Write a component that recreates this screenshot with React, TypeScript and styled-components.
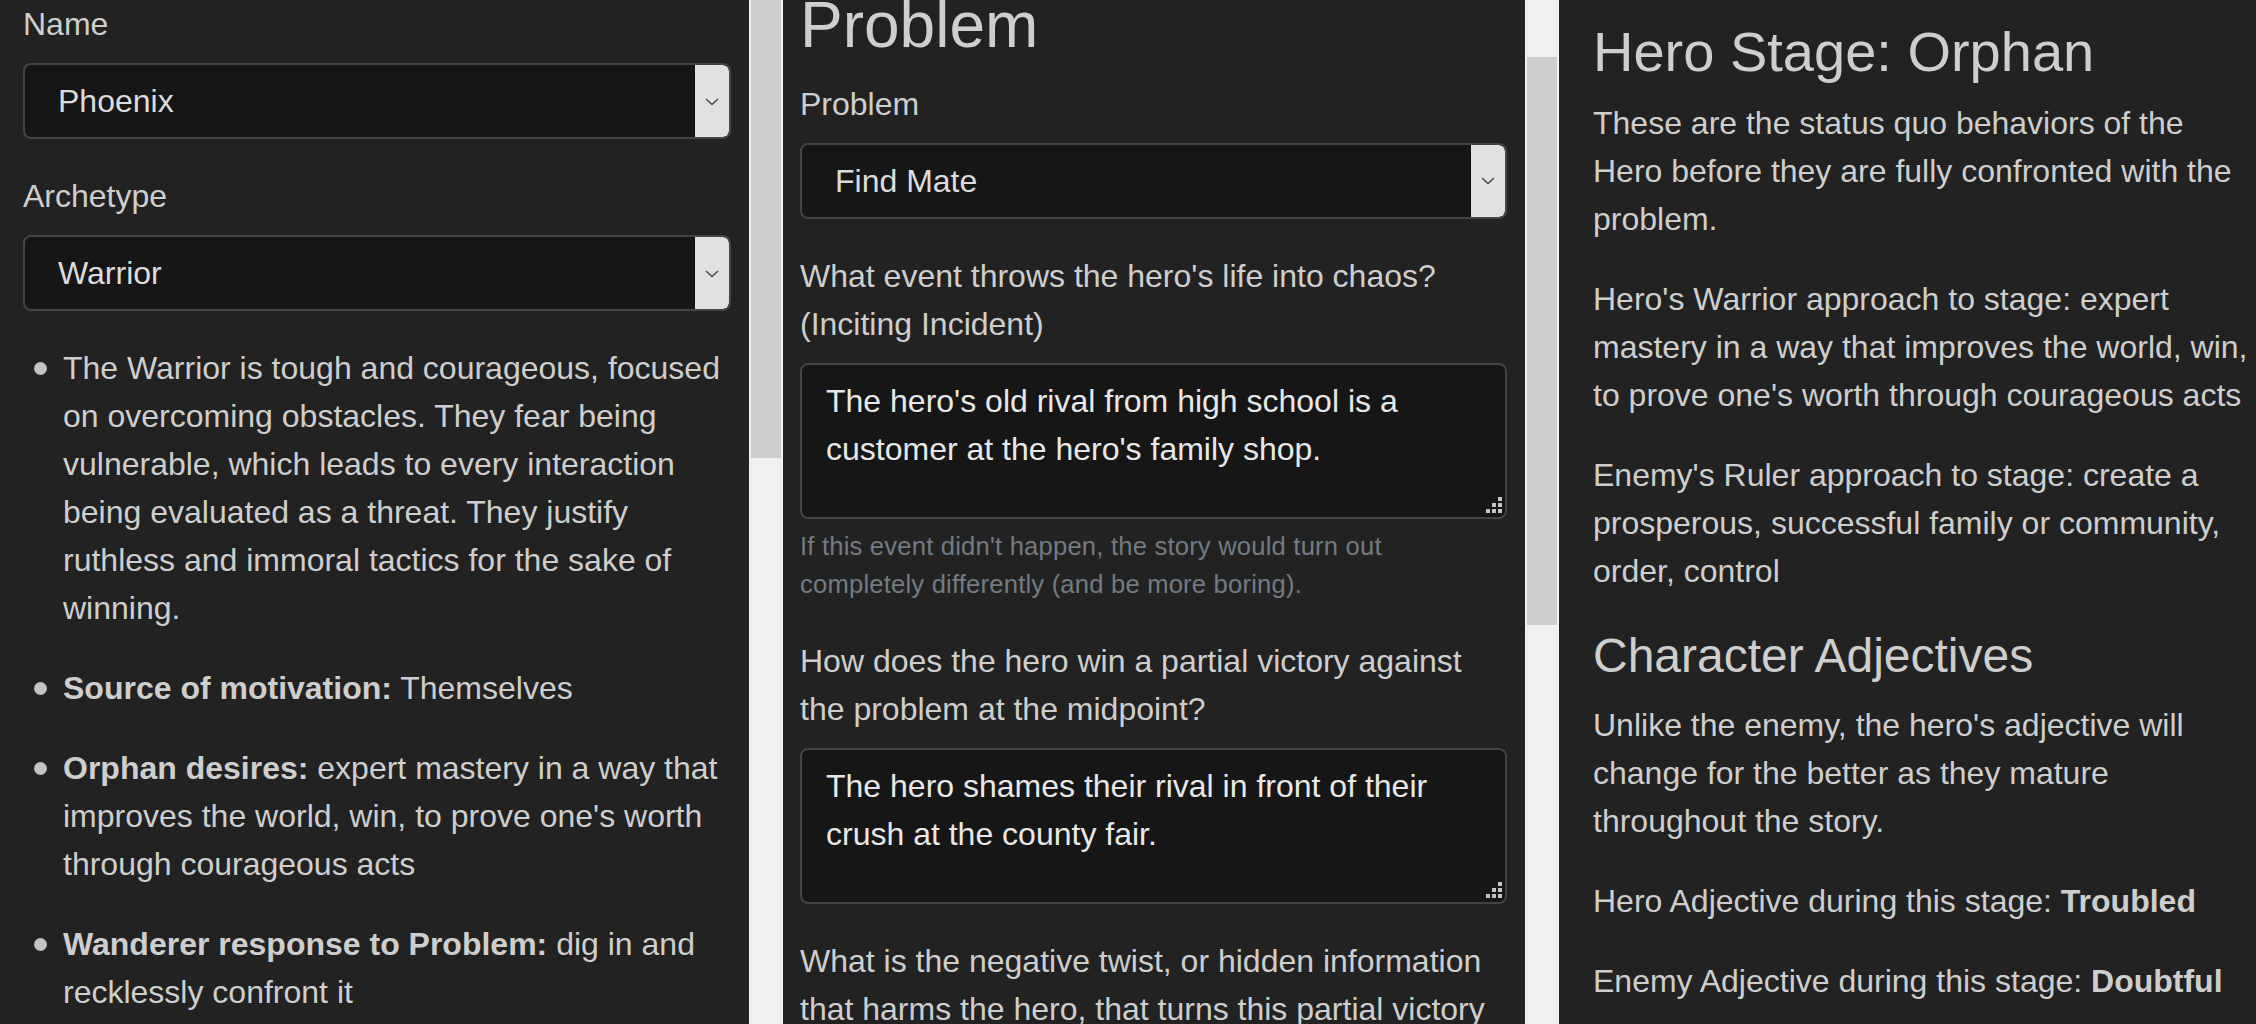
import React from "react";
import styled, { createGlobalStyle } from "styled-components";

const GlobalStyle = createGlobalStyle`
  html, body {
    margin: 0;
    padding: 0;
    background: #222222;
  }
  body {
    font-family: "Liberation Sans", Arial, sans-serif;
    color: #cecece;
  }
  *, *::before, *::after {
    box-sizing: border-box;
  }
`;

const Page = styled.div`
  display: flex;
  width: 2256px;
  height: 1024px;
  overflow: hidden;
  background: #222222;
`;

const Panel = styled.section<{ $width?: number; $pad: string }>`
  flex: ${(p) => (p.$width ? `0 0 ${p.$width}px` : "1 1 auto")};
  height: 100%;
  overflow: hidden;
  background: #222222;
  padding: ${(p) => p.$pad};
  font-size: 32px;
  line-height: 48px;
  color: #cecece;
`;

const ScrollTrack = styled.div`
  flex: 0 0 34px;
  height: 100%;
  background: #f0f0f0;
  padding: 0 2px;
  display: flex;
  flex-direction: column;
`;

const ScrollThumb = styled.div<{ $top: number; $height: number }>`
  margin-top: ${(p) => p.$top}px;
  height: ${(p) => p.$height}px;
  background: #cdcdcd;
  flex: none;
`;

const FormGroup = styled.div`
  margin-bottom: 33px;
`;

const Label = styled.label`
  display: block;
  margin-bottom: 15px;
`;

const SelectBox = styled.div`
  display: flex;
  height: 76px;
  border: 2px solid #444444;
  border-radius: 8px;
  background: #161616;
  overflow: hidden;
`;

const SelectValue = styled.div`
  flex: 1;
  display: flex;
  align-items: center;
  padding-left: 33px;
  color: #dcdcdc;
  font-size: 32px;
`;

const SelectButton = styled.div`
  flex: 0 0 34px;
  display: flex;
  align-items: center;
  justify-content: center;
  background: #e1e1e1;
  border-radius: 0 6px 6px 0;
`;

const TextBox = styled.div`
  position: relative;
  height: 156px;
  border: 2px solid #444444;
  border-radius: 8px;
  background: #161616;
  padding: 12px 24px;
  color: #e8e8e8;
  font-size: 32px;
  line-height: 48px;
`;

const Grip = styled.svg`
  position: absolute;
  right: 3px;
  bottom: 4px;
`;

const HelpText = styled.small`
  display: block;
  margin-top: 8px;
  font-size: 25.6px;
  line-height: 38.4px;
  letter-spacing: 0.2px;
  color: #737b83;
`;

const BigTitle = styled.h2`
  margin: 0 0 16px;
  font-size: 64px;
  line-height: 1.2;
  font-weight: 400;
  color: #cecece;
`;

const Heading = styled.h3<{ $size: number }>`
  margin: 0 0 ${(p) => (p.$size > 50 ? 14 : 16)}px;
  font-size: ${(p) => p.$size}px;
  line-height: 1.2;
  font-weight: 400;
  color: #cecece;
`;

const Paragraph = styled.p`
  margin: 0 0 32px;
`;

const List = styled.ul`
  list-style: none;
  margin: 0;
  padding: 0;
`;

const Item = styled.li`
  display: flex;
  align-items: flex-start;
`;

const Bullet = styled.span`
  flex: 0 0 13px;
  width: 13px;
  height: 13px;
  margin: 18px 16px 0 11px;
  border-radius: 50%;
  background: #c4c4c4;
`;

const ItemText = styled.p`
  flex: 1;
  margin: 0 0 32px;
`;

const RightContent = styled.div`
  max-width: 658px;
`;

function Chevron() {
  return (
    <svg width="16" height="9" viewBox="0 0 16 9" aria-hidden="true">
      <polyline points="2,2 8,7.5 14,2" fill="none" stroke="#4a4a4a" strokeWidth="1.6" />
    </svg>
  );
}

function Select({ value }: { value: string }) {
  return (
    <SelectBox>
      <SelectValue>{value}</SelectValue>
      <SelectButton>
        <Chevron />
      </SelectButton>
    </SelectBox>
  );
}

function TextArea({ children }: { children: React.ReactNode }) {
  return (
    <TextBox>
      {children}
      <Grip width="16" height="16" viewBox="0 0 16 16" aria-hidden="true">
        <g fill="#c4c4c4">
          <rect x="12" y="0" width="4" height="4" />
          <rect x="6" y="6" width="4" height="4" />
          <rect x="12" y="6" width="4" height="4" />
          <rect x="0" y="12" width="4" height="4" />
          <rect x="6" y="12" width="4" height="4" />
          <rect x="12" y="12" width="4" height="4" />
        </g>
      </Grip>
    </TextBox>
  );
}

function CharacterPanel() {
  return (
    <Panel $width={749} $pad="0 18px 0 23px">
      <FormGroup>
        <Label>Name</Label>
        <Select value="Phoenix" />
      </FormGroup>
      <FormGroup>
        <Label>Archetype</Label>
        <Select value="Warrior" />
      </FormGroup>
      <List>
        <Item>
          <Bullet />
          <ItemText>
            The Warrior is tough and courageous, focused on overcoming obstacles. They fear being
            vulnerable, which leads to every interaction being evaluated as a threat. They justify
            ruthless and immoral tactics for the sake of winning.
          </ItemText>
        </Item>
        <Item>
          <Bullet />
          <ItemText>
            <strong>Source of motivation:</strong> Themselves
          </ItemText>
        </Item>
        <Item>
          <Bullet />
          <ItemText>
            <strong>Orphan desires:</strong> expert mastery in a way that improves the world, win, to
            prove one's worth through courageous acts
          </ItemText>
        </Item>
        <Item>
          <Bullet />
          <ItemText>
            <strong>Wanderer response to Problem:</strong> dig in and recklessly confront it
          </ItemText>
        </Item>
        <Item>
          <Bullet />
          <ItemText>
            <strong>Warrior response to Problem:</strong> take charge and attack it head on
          </ItemText>
        </Item>
      </List>
    </Panel>
  );
}

function ProblemPanel() {
  const scrollRef = (el: HTMLElement | null) => {
    if (el) el.scrollTop = 13;
  };
  return (
    <Panel $width={742} $pad="0 18px 0 17px" ref={scrollRef}>
      <BigTitle>Problem</BigTitle>
      <FormGroup>
        <Label>Problem</Label>
        <Select value="Find Mate" />
      </FormGroup>
      <FormGroup>
        <Label>What event throws the hero's life into chaos? (Inciting Incident)</Label>
        <TextArea>The hero's old rival from high school is a customer at the hero's family shop.</TextArea>
        <HelpText>
          If this event didn't happen, the story would turn out completely differently (and be more
          boring).
        </HelpText>
      </FormGroup>
      <FormGroup>
        <Label>How does the hero win a partial victory against the problem at the midpoint?</Label>
        <TextArea>The hero shames their rival in front of their crush at the county fair.</TextArea>
      </FormGroup>
      <FormGroup>
        <Label>
          What is the negative twist, or hidden information that harms the hero, that turns this
          partial victory into a defeat?
        </Label>
        <TextArea>The rival reveals the hero's secret to the whole town.</TextArea>
      </FormGroup>
    </Panel>
  );
}

function StagePanel() {
  return (
    <Panel $pad="18px 0 0 34px">
      <RightContent>
        <Heading $size={56}>Hero Stage: Orphan</Heading>
        <Paragraph>
          These are the status quo behaviors of the Hero before they are fully confronted with the
          problem.
        </Paragraph>
        <Paragraph>
          Hero's Warrior approach to stage: expert mastery in a way that improves the world, win, to
          prove one's worth through courageous acts
        </Paragraph>
        <Paragraph>
          Enemy's Ruler approach to stage: create a prosperous, successful family or community, order,
          control
        </Paragraph>
        <Heading as="h4" $size={48}>
          Character Adjectives
        </Heading>
        <Paragraph>
          Unlike the enemy, the hero's adjective will change for the better as they mature throughout
          the story.
        </Paragraph>
        <Paragraph>
          Hero Adjective during this stage: <strong>Troubled</strong>
        </Paragraph>
        <Paragraph>
          Enemy Adjective during this stage: <strong>Doubtful</strong>
        </Paragraph>
      </RightContent>
    </Panel>
  );
}

export default function App() {
  return (
    <>
      <GlobalStyle />
      <Page>
        <CharacterPanel />
        <ScrollTrack>
          <ScrollThumb $top={0} $height={458} />
        </ScrollTrack>
        <ProblemPanel />
        <ScrollTrack>
          <ScrollThumb $top={57} $height={568} />
        </ScrollTrack>
        <StagePanel />
      </Page>
    </>
  );
}
